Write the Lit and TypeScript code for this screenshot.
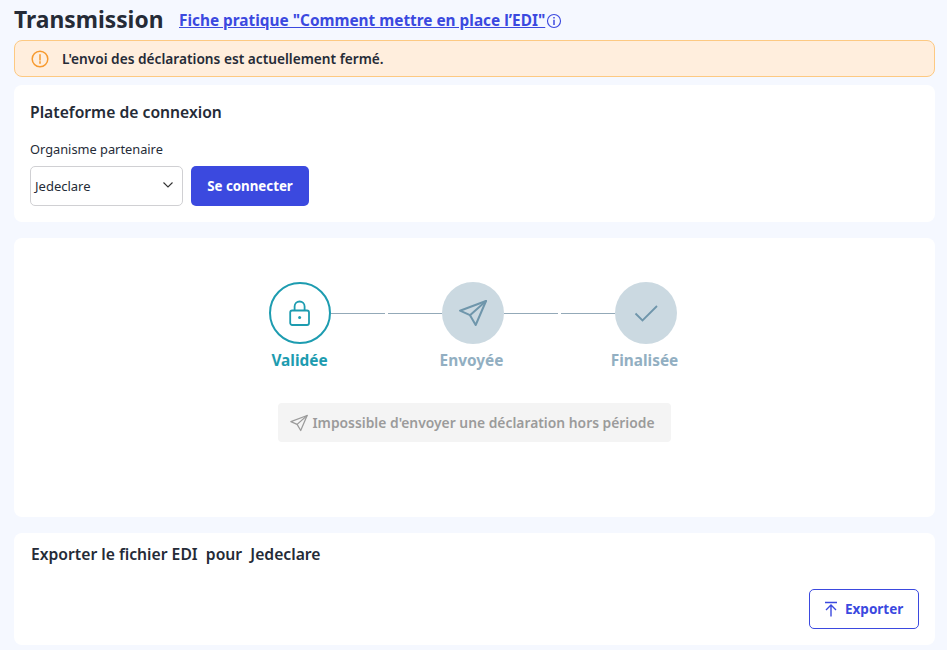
import { LitElement, html, css } from "lit";
import { customElement } from "lit/decorators.js";

const send = html`<svg class="send" viewBox="0 0 32 32" fill="none" stroke="currentColor" stroke-width="2" stroke-linejoin="round" stroke-linecap="round"><path d="M29 4 3 13.7l10 4.5 5.7 9.8L29 4Z"/><path d="M29 4 13 18.2"/></svg>`;

@customElement("app-root")
export class AppRoot extends LitElement {
  static styles = css`
    :host { display: block; width: 947px; height: 650px; overflow: hidden; background: #f5f8ff; font-family: "Noto Sans", sans-serif; color: #252b37; }
    * { box-sizing: border-box; }
    .page { display: flex; flex-direction: column; padding: 0 12px 0 14px; }
    .head { display: flex; align-items: center; height: 40px; padding-top: 1px; }
    h1 { margin: 0; font-size: 22.8px; font-weight: 700; line-height: 30px; width: 165px; margin-top: -1px; }
    .link { color: #3b49df; font-size: 15.37px; font-weight: 700; text-decoration: underline; }
    .info { width: 16px; height: 16px; margin-left: 1px; color: #3b49df; }
    .alert { height: 37px; display: flex; align-items: center; background: #ffeedd; border: 1px solid #fdc982; border-radius: 8px; padding-left: 16px; font-size: 13.7px; font-weight: 600; margin-bottom: 8px; line-height: 32px; }
    .alert svg { width: 18px; height: 18px; margin-right: 13px; color: #f79a2e; }
    .card { background: #fff; border-radius: 8px; }
    .c1 { height: 137px; padding: 16px; margin-bottom: 16px; }
    h2 { margin: 0; font-size: 15.7px; line-height: 22px; font-weight: 600; }
    .lbl { font-size: 12.8px; line-height: 18px; margin-top: 17px; margin-bottom: 8px; }
    .row { display: flex; gap: 8px; }
    .sel { width: 153px; height: 40px; border: 1px solid #d0d0d3; border-radius: 5px; display: flex; align-items: center; justify-content: space-between; padding: 0 8px 0 4px; font-size: 13px; background: #fff; }
    .sel svg { width: 12px; height: 12px; margin-top: -3px; }
    .btn { width: 118px; height: 40px; background: #3b49df; color: #fff; border-radius: 5px; display: flex; align-items: center; justify-content: center; font-size: 13.3px; font-weight: 700; }
    .c2 { height: 279px; margin-bottom: 16px; padding-top: 44px; display: flex; flex-direction: column; align-items: center; }
    .stepper { display: flex; align-items: flex-start; margin-left: -3px; }
    .step { width: 62px; display: flex; flex-direction: column; align-items: center; }
    .circle { width: 62px; height: 62px; border-radius: 50%; background: #cbd9e1; color: #6f96ab; display: flex; align-items: center; justify-content: center; }
    .circle.on { background: #fff; border: 2px solid #1d9cb0; color: #1d9cb0; }
    .circle svg { width: 28px; height: 28px; }
    .circle svg.send { width: 32px; height: 32px; }
    .name { font-size: 15.4px; font-weight: 700; line-height: 20px; margin-top: 7px; color: #92afc2; white-space: nowrap; margin-right: 3px; }
    .name.on { color: #1d9cb0; margin-right: 1px; }
    .link-line { width: 111px; height: 62px; display: flex; align-items: center; gap: 3px; }
    .link-line i { flex: 1; height: 1px; background: #93a9b8; }
    .off { margin-top: 32px; width: 393px; height: 39px; background: #f4f4f4; border-radius: 4px; display: flex; align-items: center; padding-left: 11px; gap: 4px; color: #9b9b9b; font-size: 13.85px; font-weight: 600; margin-left: -1px; }
    .off svg { width: 20px; height: 20px; }
    .c3 { height: 112px; padding: 10px 16px 16px 17px; display: flex; flex-direction: column; justify-content: space-between; }
    .exp { align-self: flex-end; width: 110px; height: 40px; border: 1px solid #3b49df; border-radius: 5px; color: #3b49df; display: flex; align-items: center; padding-left: 14px; gap: 7px; font-size: 13.5px; font-weight: 700; }
    .exp svg { width: 14px; height: 16px; }
  `;

  render() {
    return html`<div class="page">
      <div class="head">
        <h1>Transmission</h1>
        <a class="link">Fiche pratique "Comment mettre en place l’EDI"</a>
        <svg class="info" viewBox="0 0 14 14" fill="none" stroke="currentColor"><circle cx="7" cy="7" r="5.7"/><path d="M7 6v4.5" stroke-width="1.3"/><path d="M7 3.6v1.3" stroke-width="1.3"/></svg>
      </div>
      <div class="alert">
        <svg viewBox="0 0 18 18" fill="none" stroke="currentColor" stroke-width="1.5"><circle cx="9" cy="9" r="7.8"/><path d="M9 4.8v5.2M9 11.8v1.4" stroke-linecap="round"/></svg>
        L'envoi des déclarations est actuellement fermé.
      </div>
      <section class="card c1">
        <h2>Plateforme de connexion</h2>
        <div class="lbl">Organisme partenaire</div>
        <div class="row">
          <div class="sel">Jedeclare
            <svg viewBox="0 0 12 12" fill="none" stroke="#333" stroke-width="1.1"><path d="M1.5 3.5 6 8l4.5-4.5"/></svg>
          </div>
          <div class="btn">Se connecter</div>
        </div>
      </section>
      <section class="card c2">
        <div class="stepper">
          <div class="step">
            <div class="circle on"><svg viewBox="0 0 28 28" fill="none" stroke="currentColor" stroke-width="1.8" stroke-linejoin="round"><rect x="4.2" y="11.5" width="18.8" height="14.5" rx="2"/><path d="M8.6 11.5V7.5a5 5 0 0 1 10 0v4"/><circle cx="13.6" cy="18.5" r="1.5" fill="currentColor" stroke="none"/></svg></div>
            <div class="name on">Validée</div>
          </div>
          <div class="link-line"><i></i><i></i></div>
          <div class="step">
            <div class="circle">${send}</div>
            <div class="name">Envoyée</div>
          </div>
          <div class="link-line"><i></i><i></i></div>
          <div class="step">
            <div class="circle"><svg viewBox="0 0 28 28" fill="none" stroke="currentColor" stroke-width="1.8"><path d="M3.5 14.5 10.5 21.5 25 7"/></svg></div>
            <div class="name">Finalisée</div>
          </div>
        </div>
        <div class="off">${send}Impossible d'envoyer une déclaration hors période</div>
      </section>
      <section class="card c3">
        <h2>Exporter le fichier EDI&nbsp; pour&nbsp; Jedeclare</h2>
        <div class="exp"><svg viewBox="0 0 14 16" fill="none" stroke="currentColor" stroke-width="1.4"><path d="M1 1.5h12M7 15.5V4M2 9l5-5 5 5"/></svg>Exporter</div>
      </section>
    </div>`;
  }
}
